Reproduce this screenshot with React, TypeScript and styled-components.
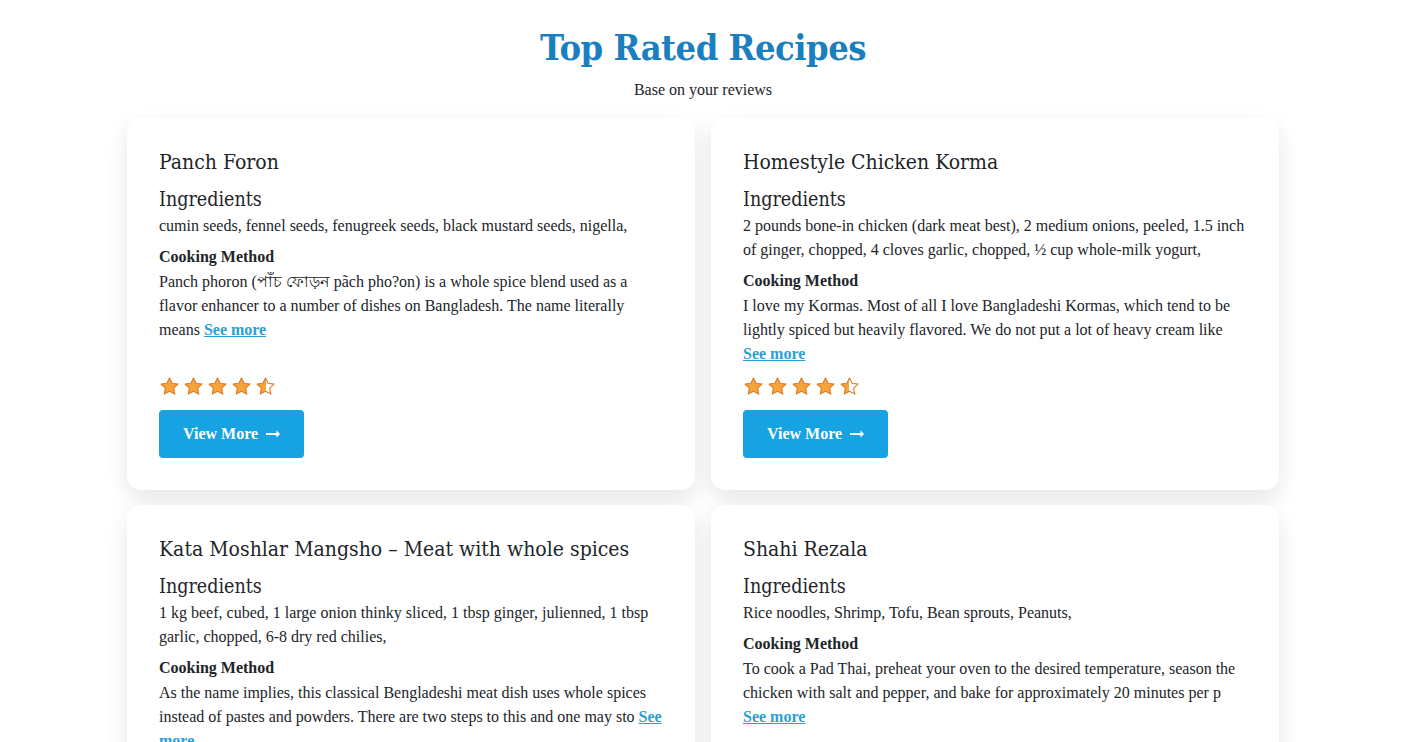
import React from "react";
import styled, { createGlobalStyle } from "styled-components";

const GlobalStyle = createGlobalStyle`
  html, body { margin: 0; padding: 0; background: #ffffff; }
  body { font-family: "Liberation Serif", "Times New Roman", serif; color: #212529; }
  * { box-sizing: border-box; }
`;

const Page = styled.main`
  padding: 25px 0 40px;
`;

const Header = styled.header`
  display: flex;
  flex-direction: column;
  align-items: center;
`;

const Title = styled.h1`
  margin: 0;
  font-family: "DejaVu Serif", serif;
  font-stretch: condensed;
  font-weight: 700;
  font-size: 36px;
  line-height: 44px;
  color: #1a7fbf;
  letter-spacing: -0.5px;
`;

const Subtitle = styled.p`
  margin: 9px 0 0;
  font-size: 16px;
  line-height: 24px;
  color: #212529;
`;

const Grid = styled.section`
  width: 1152px;
  margin: 16px auto 0;
  display: grid;
  grid-template-columns: 1fr 1fr;
  column-gap: 16px;
  row-gap: 15px;
`;

const Card = styled.article`
  background: #fff;
  border-radius: 14px;
  box-shadow: 0 9px 22px rgba(0, 0, 0, 0.1);
  padding: 32px;
  display: flex;
  flex-direction: column;
`;

const CardTitle = styled.h2`
  margin: 0;
  font-family: "DejaVu Serif", serif;
  font-stretch: condensed;
  font-weight: 400;
  font-size: 21px;
  line-height: 24px;
  color: #212529;
`;

const SectionTitle = styled.h3`
  margin: 14px 0 2px;
  font-family: "DejaVu Serif", serif;
  font-stretch: condensed;
  font-weight: 400;
  font-size: 19.5px;
  line-height: 24px;
  color: #212529;
`;

const Text = styled.p`
  margin: 0;
  font-size: 16px;
  line-height: 24px;
  color: #212529;
`;

const MethodLabel = styled.h4`
  margin: 7px 0 1px;
  font-size: 16px;
  line-height: 24px;
  font-weight: 700;
  color: #212529;
`;

const SeeMore = styled.a`
  font-weight: 700;
  color: #2a9fd6;
  text-decoration: underline;
  cursor: pointer;
`;

const Stars = styled.div`
  margin-top: auto;
  padding-top: 10px;
  display: flex;
  gap: 3px;
`;

const StarSvg = styled.svg`
  width: 21px;
  height: 21px;
  display: block;
`;

const ViewButton = styled.button`
  margin-top: 13px;
  align-self: flex-start;
  height: 48px;
  padding: 0 24px;
  border: none;
  border-radius: 4px;
  background: #17a2e2;
  color: #fff;
  font-family: "Liberation Serif", serif;
  font-weight: 700;
  font-size: 16px;
  display: flex;
  align-items: center;
  gap: 8px;
  cursor: pointer;
`;

const STAR = "M12 2.2l2.95 6.15 6.75.9-4.93 4.7 1.22 6.7L12 17.4l-5.99 3.25 1.22-6.7L2.3 9.25l6.75-.9z";

const Star = ({ half, id }: { half?: boolean; id: string }) => (
  <StarSvg viewBox="0 0 24 24">
    {half && (
      <defs>
        <linearGradient id={id} x1="0" x2="1" y1="0" y2="0">
          <stop offset="50%" stopColor="#f9a43a" />
          <stop offset="50%" stopColor="#ffffff" />
        </linearGradient>
      </defs>
    )}
    <path
      d={STAR}
      fill={half ? `url(#${id})` : "#f9a43a"}
      stroke="#d9802c"
      strokeWidth="1.3"
      strokeLinejoin="round"
    />
  </StarSvg>
);

const Arrow = () => (
  <svg width="14" height="12" viewBox="0 0 14 12">
    <path d="M0 5h10.5V2.2L14 6l-3.5 3.8V7H0z" fill="#fff" />
  </svg>
);

type Recipe = { title: string; ingredients: string; method: string };

const recipes: Recipe[] = [
  {
    title: "Panch Foron",
    ingredients: "cumin seeds, fennel seeds, fenugreek seeds, black mustard seeds, nigella,",
    method:
      "Panch phoron (পাঁচ ফোড়ন pãch pho?on) is a whole spice blend used as a flavor enhancer to a number of dishes on Bangladesh. The name literally means",
  },
  {
    title: "Homestyle Chicken Korma",
    ingredients:
      "2 pounds bone-in chicken (dark meat best), 2 medium onions, peeled, 1.5 inch of ginger, chopped, 4 cloves garlic, chopped, ½ cup whole-milk yogurt,",
    method:
      "I love my Kormas. Most of all I love Bangladeshi Kormas, which tend to be lightly spiced but heavily flavored. We do not put a lot of heavy cream like",
  },
  {
    title: "Kata Moshlar Mangsho – Meat with whole spices",
    ingredients:
      "1 kg beef, cubed, 1 large onion thinky sliced, 1 tbsp ginger, julienned, 1 tbsp garlic, chopped, 6-8 dry red chilies,",
    method:
      "As the name implies, this classical Bengladeshi meat dish uses whole spices instead of pastes and powders. There are two steps to this and one may sto",
  },
  {
    title: "Shahi Rezala",
    ingredients: "Rice noodles, Shrimp, Tofu, Bean sprouts, Peanuts,",
    method:
      "To cook a Pad Thai, preheat your oven to the desired temperature, season the chicken with salt and pepper, and bake for approximately 20 minutes per p",
  },
];

export default function App() {
  return (
    <>
      <GlobalStyle />
      <Page>
        <Header>
          <Title>Top Rated Recipes</Title>
          <Subtitle>Base on your reviews</Subtitle>
        </Header>
        <Grid>
          {recipes.map((r, i) => (
            <Card key={r.title}>
              <CardTitle>{r.title}</CardTitle>
              <SectionTitle>Ingredients</SectionTitle>
              <Text>{r.ingredients}</Text>
              <MethodLabel>Cooking Method</MethodLabel>
              <Text>
                {r.method} <SeeMore>See more</SeeMore>
              </Text>
              <Stars>
                {[0, 1, 2, 3].map((s) => (
                  <Star key={s} id={`s${i}-${s}`} />
                ))}
                <Star half id={`half-${i}`} />
              </Stars>
              <ViewButton>
                View More <Arrow />
              </ViewButton>
            </Card>
          ))}
        </Grid>
      </Page>
    </>
  );
}
